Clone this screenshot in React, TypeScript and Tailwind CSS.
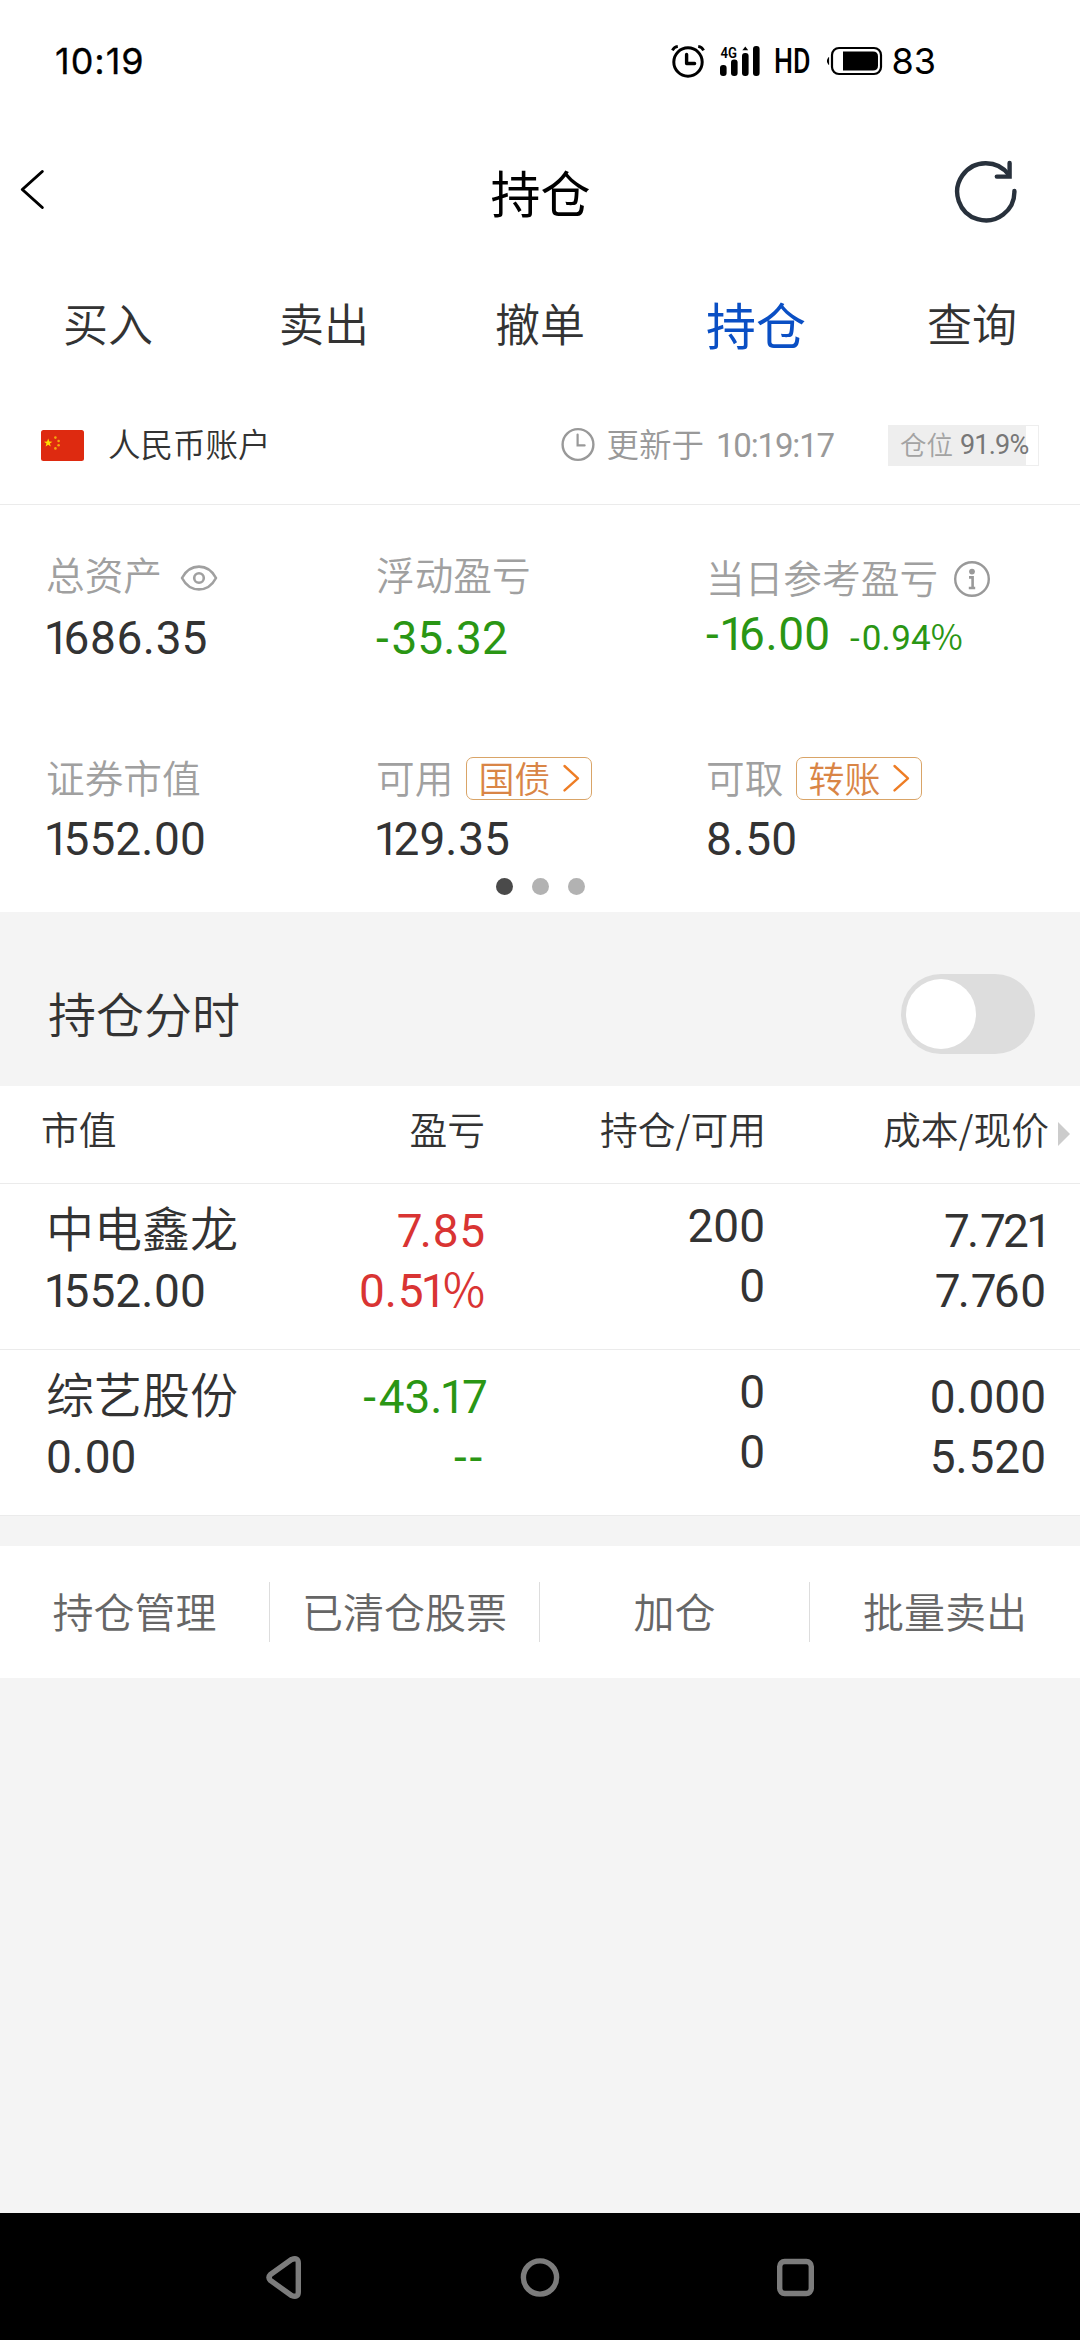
import type { ReactNode } from 'react';
import clsx from 'clsx';

type Tone = 'up' | 'down';

interface Holding {
  name: string;
  marketValue: string;
  profit: string;
  profitRate: string;
  tone: Tone;
  quantity: string;
  available: string;
  cost: string;
  price: string;
}

const tabs = ['买入', '卖出', '撤单', '持仓', '查询'];
const actions = ['持仓管理', '已清仓股票', '加仓', '批量卖出'];

const holdings: Holding[] = [
  {
    name: '中电鑫龙',
    marketValue: '1552.00',
    profit: '7.85',
    profitRate: '0.51%',
    tone: 'up',
    quantity: '200',
    available: '0',
    cost: '7.721',
    price: '7.760',
  },
  {
    name: '综艺股份',
    marketValue: '0.00',
    profit: '-43.17',
    profitRate: '--',
    tone: 'down',
    quantity: '0',
    available: '0',
    cost: '0.000',
    price: '5.520',
  },
];

const toneClass: Record<Tone, string> = {
  up: 'text-[#d93433]',
  down: 'text-[#2a9614]',
};

// Spacing after a character: pulls a following "1" closer, opens up round figures
function spacing(ch: string, next?: string) {
  if (ch === '1') return next === '%' || next === '7' ? 'tracking-[-0.08em]' : 'tracking-[-0.13em]';
  if (next === '1') return ch === '-' ? 'tracking-[0.01em]' : 'tracking-[-0.06em]';
  if (ch === '7') return 'tracking-[-0.06em]';
  if (ch === '6' || ch === '8') return 'tracking-[0.012em]';
  if (ch === '-') return 'tracking-[0.06em]';
  if (ch === '.') return 'tracking-[0.016em]';
  return 'tracking-[0em]';
}

function Num({ value, className }: { value: string; className?: string }) {
  return (
    <span
      className={clsx(
        "block whitespace-nowrap font-['Roboto',sans-serif] font-normal",
        value[0] === '1' && '-ml-[0.05em]',
        className
      )}
    >
      {value.split('').map((ch, i) => (
        <span
          key={i}
          className={
            ch === '%'
              ? "font-['Noto_Sans_CJK_SC',sans-serif] font-[350] leading-none"
              : spacing(ch, value[i + 1])
          }
        >
          {ch}
        </span>
      ))}
    </span>
  );
}

function StatusBar() {
  return (
    <div className="flex h-[122px] items-center justify-between pl-[55px] pr-[144px] font-['Inter',sans-serif] text-[36px] font-normal text-black">
      <span className="leading-[44px] tracking-[1px] [-webkit-text-stroke:0.3px_black]">10:19</span>
      <div className="flex items-center">
        <svg className="h-[34px] w-[34px]" viewBox="0 0 34 34" fill="none" stroke="#000">
          <circle cx="17" cy="18" r="14.2" strokeWidth="3" />
          <path d="M15.6 10.5v9h8" strokeWidth="3.4" strokeLinecap="round" strokeLinejoin="round" />
          <path d="M1.4 6.4Q3 3 6.8 2.4M32.6 6.4Q31 3 27.2 2.4" strokeWidth="2.8" />
        </svg>
        <svg className="ml-[14px] h-[32px] w-[42px]" viewBox="0 0 42 32">
          <rect x="1" y="20" width="6.6" height="11" rx="3" />
          <rect x="12" y="14.5" width="6.6" height="16.5" rx="3" />
          <rect x="23" y="8" width="6.6" height="23" rx="3" />
          <path d="M23.4 5.2 26.3 1.6 29.2 5.2Z" />
          <rect x="34" y="1" width="6.6" height="30" rx="3" />
          <text
            x="1.6"
            y="12.6"
            fontFamily="Roboto, sans-serif"
            fontWeight="600"
            fontSize="15.5"
            textLength="16.5"
            lengthAdjust="spacingAndGlyphs"
          >
            4G
          </text>
        </svg>
        <svg className="ml-[10px] h-[44px] w-[44px] overflow-visible" viewBox="0 0 44 44">
          <text
            x="3"
            y="34"
            fontFamily="Roboto, sans-serif"
            fontWeight="500"
            fontSize="35"
            textLength="36.5"
            lengthAdjust="spacingAndGlyphs"
          >
            HD
          </text>
        </svg>
        <svg className="ml-[11px] h-[32px] w-[58px]" viewBox="0 0 58 32" fill="none">
          <path d="M2.6 12.6Q0 16 2.6 19.4Z" fill="#000" stroke="#000" />
          <rect x="6" y="3" width="49" height="26" rx="7" stroke="#000" strokeWidth="2.2" />
          <path d="M17 6.5h30q5 0 5 5v9q0 5-5 5H17Z" fill="#000" />
        </svg>
        <span className="ml-[7px] leading-[44px]">83</span>
      </div>
    </div>
  );
}

function TitleBar() {
  return (
    <div className="flex h-[136px] items-center justify-between pl-[18px] pr-[60px]">
      <svg className="h-[42px] w-[68px] shrink-0" viewBox="0 0 68 42" fill="none" stroke="#000">
        <path d="M24.3 2.5 4.3 20.5 24.3 38.5" strokeWidth="3" strokeLinecap="round" strokeLinejoin="round" />
      </svg>
      <h1 className="pl-[43px] pt-[1px] text-[50px] font-normal leading-[72px] text-black">持仓</h1>
      <svg className="mt-[4px] h-[68px] w-[68px] shrink-0" viewBox="0 0 68 68" fill="none" stroke="#28313c">
        <g strokeWidth="4.4" strokeLinecap="round">
          <path d="M62.4 33a28.6 28.6 0 1 1-5.6-16.2" />
          <path d="M57.6 5v13.6H44.8" />
        </g>
      </svg>
    </div>
  );
}

function Tabs() {
  return (
    <div className="grid h-[128px] grid-cols-5 items-center pt-[1px] text-center">
      {tabs.map((tab) => (
        <button
          key={tab}
          className={clsx(
            'leading-[72px]',
            tab === '持仓' ? 'text-[50px] font-normal text-[#0a4fc4]' : 'text-[45px] text-[#333333]'
          )}
        >
          {tab}
        </button>
      ))}
    </div>
  );
}

function AccountBar() {
  return (
    <div className="flex h-[119px] items-center border-b border-[#ebebeb] pl-[41px] pr-[41px]">
      <svg className="h-[31px] w-[43px]" viewBox="0 0 43 31">
        <rect width="43" height="31" rx="2.5" fill="#de2a10" />
        <path
          d="M7.2 8.6 8.3 11.6 11.4 11.7 8.9 13.6 9.8 16.6 7.2 14.8 4.6 16.6 5.5 13.6 3 11.7 6.1 11.6Z"
          fill="#ffde00"
        />
        <g fill="#f5a80c">
          <circle cx="14.4" cy="7.6" r="1.3" />
          <circle cx="17.6" cy="11" r="1.3" />
          <circle cx="17.6" cy="15.2" r="1.3" />
          <circle cx="14.4" cy="18.4" r="1.3" />
        </g>
      </svg>
      <span className="ml-[24px] pb-[4px] text-[32.5px] leading-[44px] text-[#333333]">人民币账户</span>
      <div className="ml-auto flex items-center text-[#999999]">
        <svg className="h-[36px] w-[36px]" viewBox="0 0 36 36" fill="none" stroke="currentColor">
          <circle cx="18" cy="17.5" r="15.4" strokeWidth="2.4" />
          <path d="M17.6 7.6v10.8h7" strokeWidth="2.2" strokeLinecap="round" />
        </svg>
        <span className="ml-[10px] pb-[4px] text-[32.5px] leading-[44px]">更新于</span>
        <span className="ml-[12px] mt-[1px] font-['Roboto',sans-serif] text-[33px] font-normal leading-[44px] tracking-[-0.035em]">
          10:19:17
        </span>
      </div>
      <div className="ml-[54px] flex h-[41px] w-[151px] items-center border border-[#eeeeee] bg-[linear-gradient(90deg,#eeeeee_92%,#ffffff_92%)] pl-[11px]">
        <span className="pb-[2px] text-[26.5px] leading-[36px] text-[#a3a3a3]">仓位</span>
        <span className="ml-[7px] font-['Roboto',sans-serif] text-[27px] font-normal leading-[36px] tracking-[-0.03em] text-[#777777]">
          91.9%
        </span>
      </div>
    </div>
  );
}

function LinkButton({ children }: { children: ReactNode }) {
  return (
    <button className="ml-[13px] flex h-[43px] w-[126px] items-center rounded-[7px] border border-[#d9a467] pl-[11px] text-[#d98546]">
      <span className="pb-[2px] text-[36px] leading-[40px]">{children}</span>
      <svg className="ml-[12px] h-[30px] w-[18px]" viewBox="0 0 18 30" fill="none" stroke="#ee7d25">
        <path d="M2.5 3 16 15.3 2.5 27.4" strokeWidth="2.4" strokeLinecap="round" strokeLinejoin="round" />
      </svg>
    </button>
  );
}

function Label({ children, className }: { children: ReactNode; className?: string }) {
  return <span className={clsx('text-[38.7px] leading-[40px] text-[#a0a0a0]', className)}>{children}</span>;
}

function Summary() {
  return (
    <section className="h-[407px] pl-[46px] pt-[46px]">
      <div className="grid grid-cols-[330px_330px_1fr]">
        <div>
          <div className="flex h-[44px] items-center">
            <Label>总资产</Label>
            <svg className="ml-[18px] mt-[10px] h-[28px] w-[38px]" viewBox="0 0 38 28" fill="none" stroke="#a0a0a0">
              <path d="M2 14C10-1.2 28-1.2 36 14C28 29.2 10 29.2 2 14Z" strokeWidth="2.6" strokeLinejoin="round" />
              <circle cx="19" cy="14" r="4.8" strokeWidth="2.6" />
            </svg>
          </div>
          <Num value="1686.35" className="mt-[16px] text-[46px] leading-[54px] text-[#333333]" />
        </div>
        <div>
          <div className="flex h-[44px] items-center">
            <Label>浮动盈亏</Label>
          </div>
          <Num value="-35.32" className="mt-[16px] text-[46px] leading-[54px] text-[#2a9614]" />
        </div>
        <div className="pt-[3px]">
          <div className="flex h-[44px] items-center">
            <Label>当日参考盈亏</Label>
            <svg className="ml-[15px] mt-[6px] h-[38px] w-[38px]" viewBox="0 0 38 38" fill="none" stroke="#999999">
              <circle cx="19" cy="19" r="16.8" strokeWidth="2.4" />
              <circle cx="19" cy="11.6" r="2.9" fill="#999999" stroke="none" />
              <path d="M16 17.4h3.6v10.4M15.8 28h6.4" strokeWidth="2.6" />
            </svg>
          </div>
          <div className="mt-[9px] flex items-baseline text-[#2a9614]">
            <Num value="-16.00" className="text-[46px] leading-[54px]" />
            <Num value="-0.94%" className="ml-[20px] text-[35px] leading-[40px]" />
          </div>
        </div>
      </div>
      <div className="mt-[91px] grid grid-cols-[330px_330px_1fr]">
        <div>
          <div className="flex h-[44px] items-center">
            <Label className="pb-[4px]">证券市值</Label>
          </div>
          <Num value="1552.00" className="mt-[12px] text-[46px] leading-[54px] text-[#333333]" />
        </div>
        <div>
          <div className="flex h-[44px] items-center">
            <Label className="pb-[4px]">可用</Label>
            <LinkButton>国债</LinkButton>
          </div>
          <Num value="129.35" className="mt-[12px] text-[46px] leading-[54px] text-[#333333]" />
        </div>
        <div>
          <div className="flex h-[44px] items-center">
            <Label className="pb-[4px]">可取</Label>
            <LinkButton>转账</LinkButton>
          </div>
          <Num value="8.50" className="mt-[12px] text-[46px] leading-[54px] text-[#333333]" />
        </div>
      </div>
      <div className="mt-[12px] flex justify-center gap-[19px] pr-[46px]">
        <span className="h-[17px] w-[17px] rounded-full bg-[#4a4a4a]" />
        <span className="h-[17px] w-[17px] rounded-full bg-[#b2b2b2]" />
        <span className="h-[17px] w-[17px] rounded-full bg-[#b2b2b2]" />
      </div>
    </section>
  );
}

function IntradaySwitch() {
  return (
    <div className="flex h-[174px] items-center justify-between bg-[#f4f4f4] pl-[48px] pr-[45px] pt-[30px]">
      <span className="pb-[4px] text-[48px] leading-[64px] text-[#333333]">持仓分时</span>
      <button className="flex h-[80px] w-[134px] items-center rounded-full bg-[#dddddd] pl-[5px]">
        <span className="h-[70px] w-[70px] rounded-full bg-white" />
      </button>
    </div>
  );
}

function HoldingsTable() {
  return (
    <section className="text-[#333333]">
      <div className="grid h-[98px] grid-cols-[444px_281px_283px_1fr] items-center border-b border-[#ebebeb] pb-[13px] pl-[41px] text-[37.8px] leading-[52px]">
        <div className="flex justify-between">
          <span>市值</span>
          <span>盈亏</span>
        </div>
        <span className="text-right">持仓/可用</span>
        <span className="text-right">成本/现价</span>
        <svg className="ml-[9px] mt-[11px] h-[24px] w-[12px]" viewBox="0 0 12 24" fill="#cccccc">
          <path d="M0 0 12 12 0 24Z" />
        </svg>
      </div>
      {holdings.map((h) => (
        <div
          key={h.name}
          className="grid h-[166px] grid-cols-[200px_239px_280px_281px] border-b border-[#ebebeb] pl-[46px] text-[46px] leading-[60px]"
        >
          <div className="pt-[12px]">
            <div className="h-[60px] whitespace-nowrap text-[48px]">{h.name}</div>
            <Num value={h.marketValue} className="pt-[5px]" />
          </div>
          <div className={clsx('flex flex-col items-end pt-[17px]', toneClass[h.tone])}>
            <Num value={h.profit} />
            <Num value={h.profitRate} />
          </div>
          <div className="flex flex-col items-end pt-[12px]">
            <Num value={h.quantity} />
            <Num value={h.available} />
          </div>
          <div className="flex flex-col items-end pt-[17px]">
            <Num value={h.cost} />
            <Num value={h.price} />
          </div>
        </div>
      ))}
    </section>
  );
}

function ActionBar() {
  return (
    <div className="grid h-[132px] grid-cols-4 items-center bg-white">
      {actions.map((action, i) => (
        <button
          key={action}
          className={clsx(
            'h-[60px] pb-[4px] text-[41px] leading-[56px] text-[#666666]',
            i < actions.length - 1 && 'border-r border-[#dddddd]'
          )}
        >
          {action}
        </button>
      ))}
    </div>
  );
}

function NavBar() {
  return (
    <div className="flex h-[127px] items-center justify-between bg-black pl-[262px] pr-[262px]">
      <svg className="h-[44px] w-[44px]" viewBox="0 0 44 44" fill="none" stroke="#7c7c7c" strokeWidth="5.4">
        <path d="M8.5 19.5 29.5 4.5Q36.3 2 36.3 8V37Q36.3 43 29.5 40.5L8.5 25.5Q5.6 22.5 8.5 19.5Z" />
      </svg>
      <svg className="h-[44px] w-[44px]" viewBox="0 0 44 44" fill="none" stroke="#7c7c7c" strokeWidth="5.4">
        <circle cx="22" cy="22.5" r="16.6" />
      </svg>
      <svg className="h-[44px] w-[44px]" viewBox="0 0 44 44" fill="none" stroke="#7c7c7c" strokeWidth="5.4">
        <rect x="5.7" y="6.5" width="31.6" height="32" rx="5" />
      </svg>
    </div>
  );
}

export default function App() {
  return (
    <div className="flex h-[2340px] w-[1080px] flex-col overflow-hidden bg-[#f4f4f4] font-['Noto_Sans_CJK_SC',sans-serif] font-[350]">
      <div className="bg-white">
        <StatusBar />
        <TitleBar />
        <Tabs />
        <AccountBar />
        <Summary />
      </div>
      <IntradaySwitch />
      <div className="bg-white">
        <HoldingsTable />
      </div>
      <div className="mt-[30px]">
        <ActionBar />
      </div>
      <div className="mt-auto">
        <NavBar />
      </div>
    </div>
  );
}
